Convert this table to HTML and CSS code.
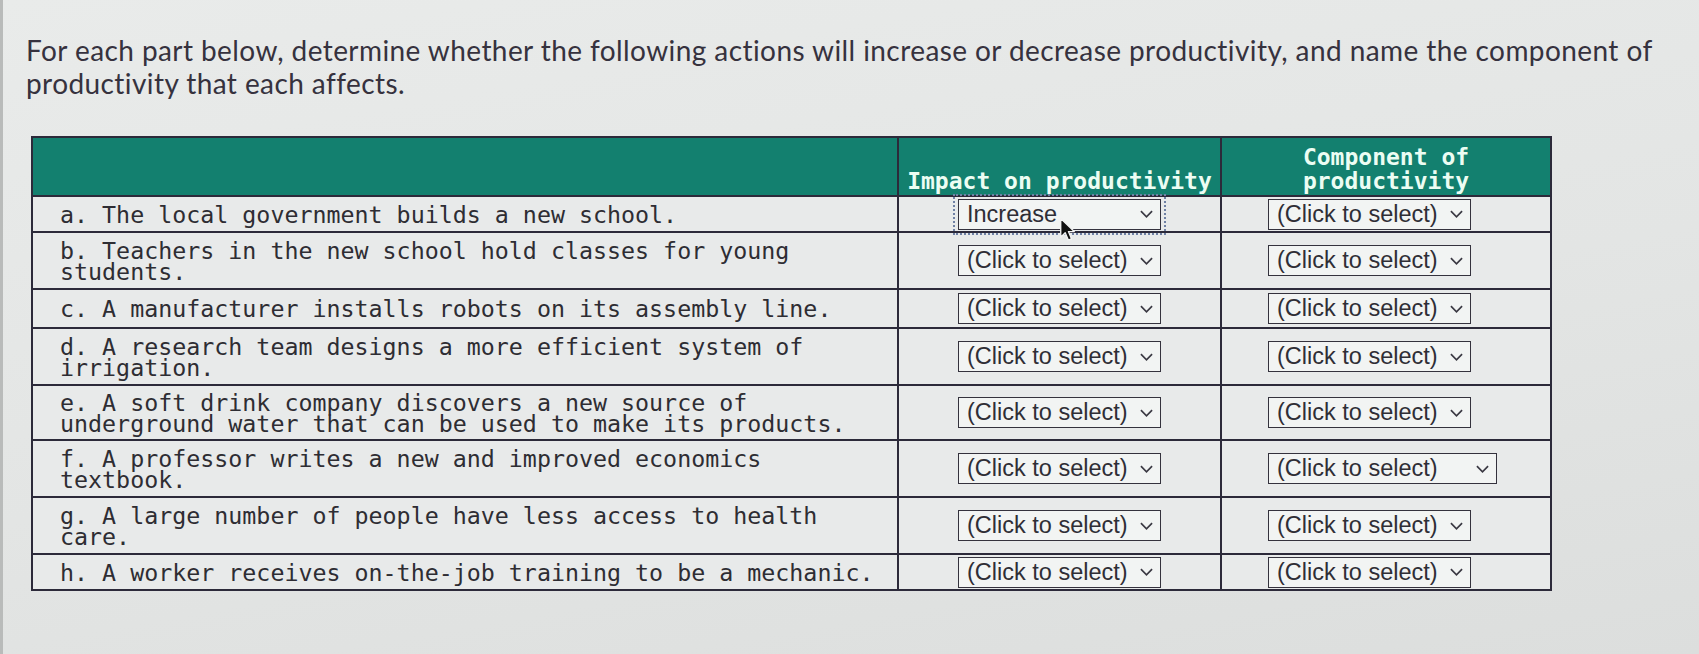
FILE: index.html
```html
<!DOCTYPE html>
<html lang="en">
<head>
<meta charset="utf-8">
<title>Productivity</title>
<link rel="stylesheet" href="styles.css">
</head>
<body>
<main class="page">
  <p class="prompt">For each part below, determine whether the following actions will increase or decrease productivity, and name the component of productivity that each affects.</p>
  <table class="grid">
    <colgroup>
      <col class="col-action">
      <col class="col-impact">
      <col class="col-component">
    </colgroup>
    <thead>
      <tr class="head-row">
        <th class="head-cell"></th>
        <th class="head-cell head-impact">Impact on productivity</th>
        <th class="head-cell head-component">Component of productivity</th>
      </tr>
    </thead>
    <tbody>
      <tr class="row-single">
        <td class="action">a. The local government builds a new school.</td>
        <td class="impact">
          <div class="select select--focus"><span class="select-value">Increase</span><svg class="chev" viewBox="0 0 14 8"><path d="M1 1 L7 7 L13 1"/></svg>
            <svg class="cursor" viewBox="0 0 16 24"><path d="M1.5 1.5 L1.5 19.5 L5.8 15.2 L8.8 22.2 L11.8 20.9 L8.9 14 L14.5 14 Z"/></svg>
          </div>
        </td>
        <td class="component"><div class="select"><span class="select-value">(Click to select)</span><svg class="chev" viewBox="0 0 14 8"><path d="M1 1 L7 7 L13 1"/></svg></div></td>
      </tr>
      <tr class="row-double">
        <td class="action">b. Teachers in the new school hold classes for young students.</td>
        <td class="impact"><div class="select"><span class="select-value">(Click to select)</span><svg class="chev" viewBox="0 0 14 8"><path d="M1 1 L7 7 L13 1"/></svg></div></td>
        <td class="component"><div class="select"><span class="select-value">(Click to select)</span><svg class="chev" viewBox="0 0 14 8"><path d="M1 1 L7 7 L13 1"/></svg></div></td>
      </tr>
      <tr class="row-single row-c">
        <td class="action">c. A manufacturer installs robots on its assembly line.</td>
        <td class="impact"><div class="select"><span class="select-value">(Click to select)</span><svg class="chev" viewBox="0 0 14 8"><path d="M1 1 L7 7 L13 1"/></svg></div></td>
        <td class="component"><div class="select"><span class="select-value">(Click to select)</span><svg class="chev" viewBox="0 0 14 8"><path d="M1 1 L7 7 L13 1"/></svg></div></td>
      </tr>
      <tr class="row-double">
        <td class="action">d. A research team designs a more efficient system of irrigation.</td>
        <td class="impact"><div class="select"><span class="select-value">(Click to select)</span><svg class="chev" viewBox="0 0 14 8"><path d="M1 1 L7 7 L13 1"/></svg></div></td>
        <td class="component"><div class="select"><span class="select-value">(Click to select)</span><svg class="chev" viewBox="0 0 14 8"><path d="M1 1 L7 7 L13 1"/></svg></div></td>
      </tr>
      <tr class="row-double row-e">
        <td class="action">e. A soft drink company discovers a new source of underground water that can be used to make its products.</td>
        <td class="impact"><div class="select"><span class="select-value">(Click to select)</span><svg class="chev" viewBox="0 0 14 8"><path d="M1 1 L7 7 L13 1"/></svg></div></td>
        <td class="component"><div class="select"><span class="select-value">(Click to select)</span><svg class="chev" viewBox="0 0 14 8"><path d="M1 1 L7 7 L13 1"/></svg></div></td>
      </tr>
      <tr class="row-double">
        <td class="action">f. A professor writes a new and improved economics textbook.</td>
        <td class="impact"><div class="select"><span class="select-value">(Click to select)</span><svg class="chev" viewBox="0 0 14 8"><path d="M1 1 L7 7 L13 1"/></svg></div></td>
        <td class="component"><div class="select select--wide"><span class="select-value">(Click to select)</span><svg class="chev" viewBox="0 0 14 8"><path d="M1 1 L7 7 L13 1"/></svg></div></td>
      </tr>
      <tr class="row-double">
        <td class="action">g. A large number of people have less access to health care.</td>
        <td class="impact"><div class="select"><span class="select-value">(Click to select)</span><svg class="chev" viewBox="0 0 14 8"><path d="M1 1 L7 7 L13 1"/></svg></div></td>
        <td class="component"><div class="select"><span class="select-value">(Click to select)</span><svg class="chev" viewBox="0 0 14 8"><path d="M1 1 L7 7 L13 1"/></svg></div></td>
      </tr>
      <tr class="row-single">
        <td class="action">h. A worker receives on-the-job training to be a mechanic.</td>
        <td class="impact"><div class="select"><span class="select-value">(Click to select)</span><svg class="chev" viewBox="0 0 14 8"><path d="M1 1 L7 7 L13 1"/></svg></div></td>
        <td class="component"><div class="select"><span class="select-value">(Click to select)</span><svg class="chev" viewBox="0 0 14 8"><path d="M1 1 L7 7 L13 1"/></svg></div></td>
      </tr>
    </tbody>
  </table>
</main>
</body>
</html>
```
FILE: styles.css
```css
html, body {
  margin: 0;
  padding: 0;
}

body {
  background: linear-gradient(170deg, #e9ebea 0%, #e3e5e4 55%, #dcdedd 100%);
  border-left: 3px solid #b9bbba;
  min-height: 654px;
  box-sizing: border-box;
}

.page {
  padding: 34px 0 0 23px;
}

.prompt {
  margin: 0;
  max-width: 1670px;
  font-family: Lato, "Open Sans", sans-serif;
  font-size: 28px;
  letter-spacing: 0.42px;
  line-height: 33px;
  color: #36323e;
}

.grid {
  margin: 36px 0 0 5px;
  width: 1519px;
  table-layout: fixed;
  border-collapse: collapse;
  border: 2px solid #2c2a3a;
  font-family: "DejaVu Sans Mono", "Liberation Mono", monospace;
  font-size: 23.3px;
  line-height: 21px;
  color: #2e2d33;
}

.col-action { width: 866px; }
.col-impact { width: 323px; }
.col-component { width: 330px; }

.head-row {
  height: 59px;
}

.head-cell {
  background: #13806f;
  color: #ecfdf3;
  font-size: 23px;
  font-weight: bold;
  text-align: center;
  vertical-align: bottom;
  padding: 0 2px 2px;
  border: 2px solid #2c2a3a;
  line-height: 24px;
}

.head-impact {
  white-space: nowrap;
}

.row-single { height: 36px; }
.row-double { height: 57px; }
.row-c { height: 39px; }
.row-e { height: 55px; }

.grid td {
  background: #e8eaea;
  border: 2px solid #2c2a3a;
  padding: 0;
  vertical-align: middle;
}

.grid td.action {
  padding: 1px 10px 1px 27px;
}

.grid td.impact {
  text-align: center;
}

.grid td.component {
  text-align: left;
  padding-left: 46px;
}

.select {
  position: relative;
  display: inline-flex;
  align-items: center;
  justify-content: space-between;
  box-sizing: border-box;
  width: 203px;
  height: 31px;
  padding: 0 7px 0 8px;
  background: #f2f4f3;
  border: 1.5px solid #34323d;
  font-family: "Liberation Sans", Arial, sans-serif;
  font-size: 23.5px;
  line-height: 27px;
  color: #2f2e36;
  vertical-align: middle;
}

.select--wide {
  width: 229px;
}

.select--focus {
  outline: 2px dotted #6f81a4;
  outline-offset: 3px;
}

.chev {
  width: 13px;
  height: 8px;
  flex: none;
}

.chev path {
  fill: none;
  stroke: #3a3842;
  stroke-width: 1.8;
}

.cursor {
  position: absolute;
  left: 100px;
  top: 17px;
  width: 17px;
  height: 25px;
}

.cursor path {
  fill: #111;
  stroke: #f4f4f4;
  stroke-width: 1.3;
  stroke-linejoin: round;
}
```
